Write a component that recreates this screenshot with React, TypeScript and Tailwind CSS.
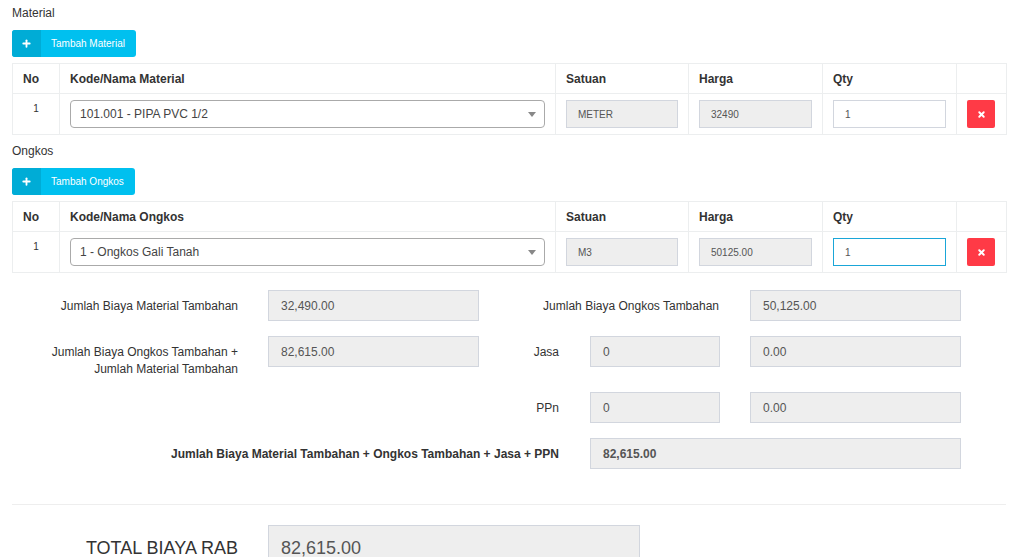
import { Plus, X } from 'lucide-react'

const font = { fontFamily: '"Liberation Sans", Arial, sans-serif' }

const AddButton = ({ label }: { label: string }) => (
  <button className="flex h-[27px] items-stretch overflow-hidden rounded-[3px] bg-[#00c0ef] text-white">
    <span className="flex w-[29px] items-center justify-center bg-[#00acd6]">
      <Plus size={11} strokeWidth={4} />
    </span>
    <span className="flex items-center pl-[10px] pr-[11px] text-[10px]">{label}</span>
  </button>
)

const ReadOnly = ({ value, className = '' }: { value: string; className?: string }) => (
  <div
    className={`flex h-[28px] items-center border border-[#d2d6de] bg-[#eeeeee] px-[11px] text-[10px] text-[#555] ${className}`}
  >
    {value}
  </div>
)

const ItemTable = ({
  title,
  item,
  satuan,
  harga,
  focused,
}: {
  title: string
  item: string
  satuan: string
  harga: string
  focused?: boolean
}) => (
  <table className="w-[994px] table-fixed border-collapse text-[12px] text-[#333]">
    <colgroup>
      <col className="w-[47px]" />
      <col className="w-[496px]" />
      <col className="w-[133px]" />
      <col className="w-[134px]" />
      <col className="w-[134px]" />
      <col className="w-[50px]" />
    </colgroup>
    <thead>
      <tr className="h-[30px]">
        <th className="border border-[#eceeef] px-[10px] text-left font-bold">No</th>
        <th className="border border-[#eceeef] px-[10px] text-left font-bold">{title}</th>
        <th className="border border-[#eceeef] px-[10px] text-left font-bold">Satuan</th>
        <th className="border border-[#eceeef] px-[10px] text-left font-bold">Harga</th>
        <th className="border border-[#eceeef] px-[10px] text-left font-bold">Qty</th>
        <th className="border border-[#eceeef]"></th>
      </tr>
    </thead>
    <tbody>
      <tr>
        <td className="border border-[#eceeef] pt-[7px] text-center align-top text-[10px]">1</td>
        <td className="border border-[#eceeef] px-[10px] pt-[6px] pb-[6px]">
          <div className="flex h-[28px] items-center justify-between rounded-[4px] border border-[#aaa] bg-white pr-[8px] pl-[9px] text-[12px] text-[#444]">
            <span>{item}</span>
            <span className="h-0 w-0 border-x-[4px] border-t-[5px] border-x-transparent border-t-[#888]"></span>
          </div>
        </td>
        <td className="border border-[#eceeef] px-[10px] pt-[6px] pb-[6px]">
          <ReadOnly value={satuan} />
        </td>
        <td className="border border-[#eceeef] px-[10px] pt-[6px] pb-[6px]">
          <ReadOnly value={harga} />
        </td>
        <td className="border border-[#eceeef] px-[10px] pt-[6px] pb-[6px]">
          <div
            className={`flex h-[28px] items-center border bg-white px-[11px] text-[10px] text-[#555] ${
              focused ? 'border-[#1aa6d8]' : 'border-[#d2d6de]'
            }`}
          >
            1
          </div>
        </td>
        <td className="border border-[#eceeef] px-[10px] pt-[6px] pb-[6px]">
          <button className="flex h-[28px] w-[28px] items-center justify-center rounded-[2px] bg-[#ff3a46] text-white">
            <X size={9} strokeWidth={5} />
          </button>
        </td>
      </tr>
    </tbody>
  </table>
)

const Field = ({ value, w, bold }: { value: string; w: string; bold?: boolean }) => (
  <div
    className={`flex h-[31px] shrink-0 items-center border border-[#d2d6de] bg-[#eeeeee] px-[12px] text-[12px] text-[#555] ${w} ${
      bold ? 'font-bold' : ''
    }`}
  >
    {value}
  </div>
)

export default function App() {
  return (
    <div className="min-h-screen bg-white px-[12px] text-[#333]" style={font}>
      <div className="pt-[5px] text-[12px] leading-[17px]">Material</div>
      <div className="mt-[8px]">
        <AddButton label="Tambah Material" />
      </div>
      <div className="mt-[6px]">
        <ItemTable title="Kode/Nama Material" item="101.001 - PIPA PVC 1/2" satuan="METER" harga="32490" />
      </div>

      <div className="mt-[8px] text-[12px] leading-[17px]">Ongkos</div>
      <div className="mt-[8px]">
        <AddButton label="Tambah Ongkos" />
      </div>
      <div className="mt-[6px]">
        <ItemTable title="Kode/Nama Ongkos" item="1 - Ongkos Gali Tanah" satuan="M3" harga="50125.00" focused />
      </div>

      <div className="mt-[17px] text-[12px]">
        <div className="flex items-center">
          <div className="w-[226px] shrink-0 text-right">Jumlah Biaya Material Tambahan</div>
          <div className="ml-[30px]">
            <Field value="32,490.00" w="w-[211px]" />
          </div>
          <div className="w-[240px] shrink-0 text-right">Jumlah Biaya Ongkos Tambahan</div>
          <div className="ml-[31px]">
            <Field value="50,125.00" w="w-[211px]" />
          </div>
        </div>

        <div className="mt-[15px] flex items-start">
          <div className="w-[226px] shrink-0 pt-[8px] text-right leading-[17px]">
            Jumlah Biaya Ongkos Tambahan +<br />
            Jumlah Material Tambahan
          </div>
          <div className="ml-[30px]">
            <Field value="82,615.00" w="w-[211px]" />
          </div>
          <div className="w-[80px] shrink-0 pt-[7px] text-right">Jasa</div>
          <div className="ml-[31px]">
            <Field value="0" w="w-[130px]" />
          </div>
          <div className="ml-[30px]">
            <Field value="0.00" w="w-[211px]" />
          </div>
        </div>

        <div className="mt-[14px] flex items-center">
          <div className="w-[467px] shrink-0"></div>
          <div className="w-[80px] shrink-0 text-right">PPn</div>
          <div className="ml-[31px]">
            <Field value="0" w="w-[130px]" />
          </div>
          <div className="ml-[30px]">
            <Field value="0.00" w="w-[211px]" />
          </div>
        </div>

        <div className="mt-[15px] flex items-center">
          <div className="w-[547px] shrink-0 text-right font-bold">
            Jumlah Biaya Material Tambahan + Ongkos Tambahan + Jasa + PPN
          </div>
          <div className="ml-[31px]">
            <Field value="82,615.00" w="w-[371px]" bold />
          </div>
        </div>
      </div>

      <hr className="mt-[35px] w-[994px] border-t border-[#eeeeee]" />

      <div className="mt-[20px] flex items-center pb-[10px]">
        <div className="w-[226px] shrink-0 text-right text-[18px]">TOTAL BIAYA RAB</div>
        <div className="ml-[30px] flex h-[46px] w-[372px] items-center border border-[#d2d6de] bg-[#eeeeee] px-[12px] text-[18px] text-[#555]">
          82,615.00
        </div>
      </div>
    </div>
  )
}
